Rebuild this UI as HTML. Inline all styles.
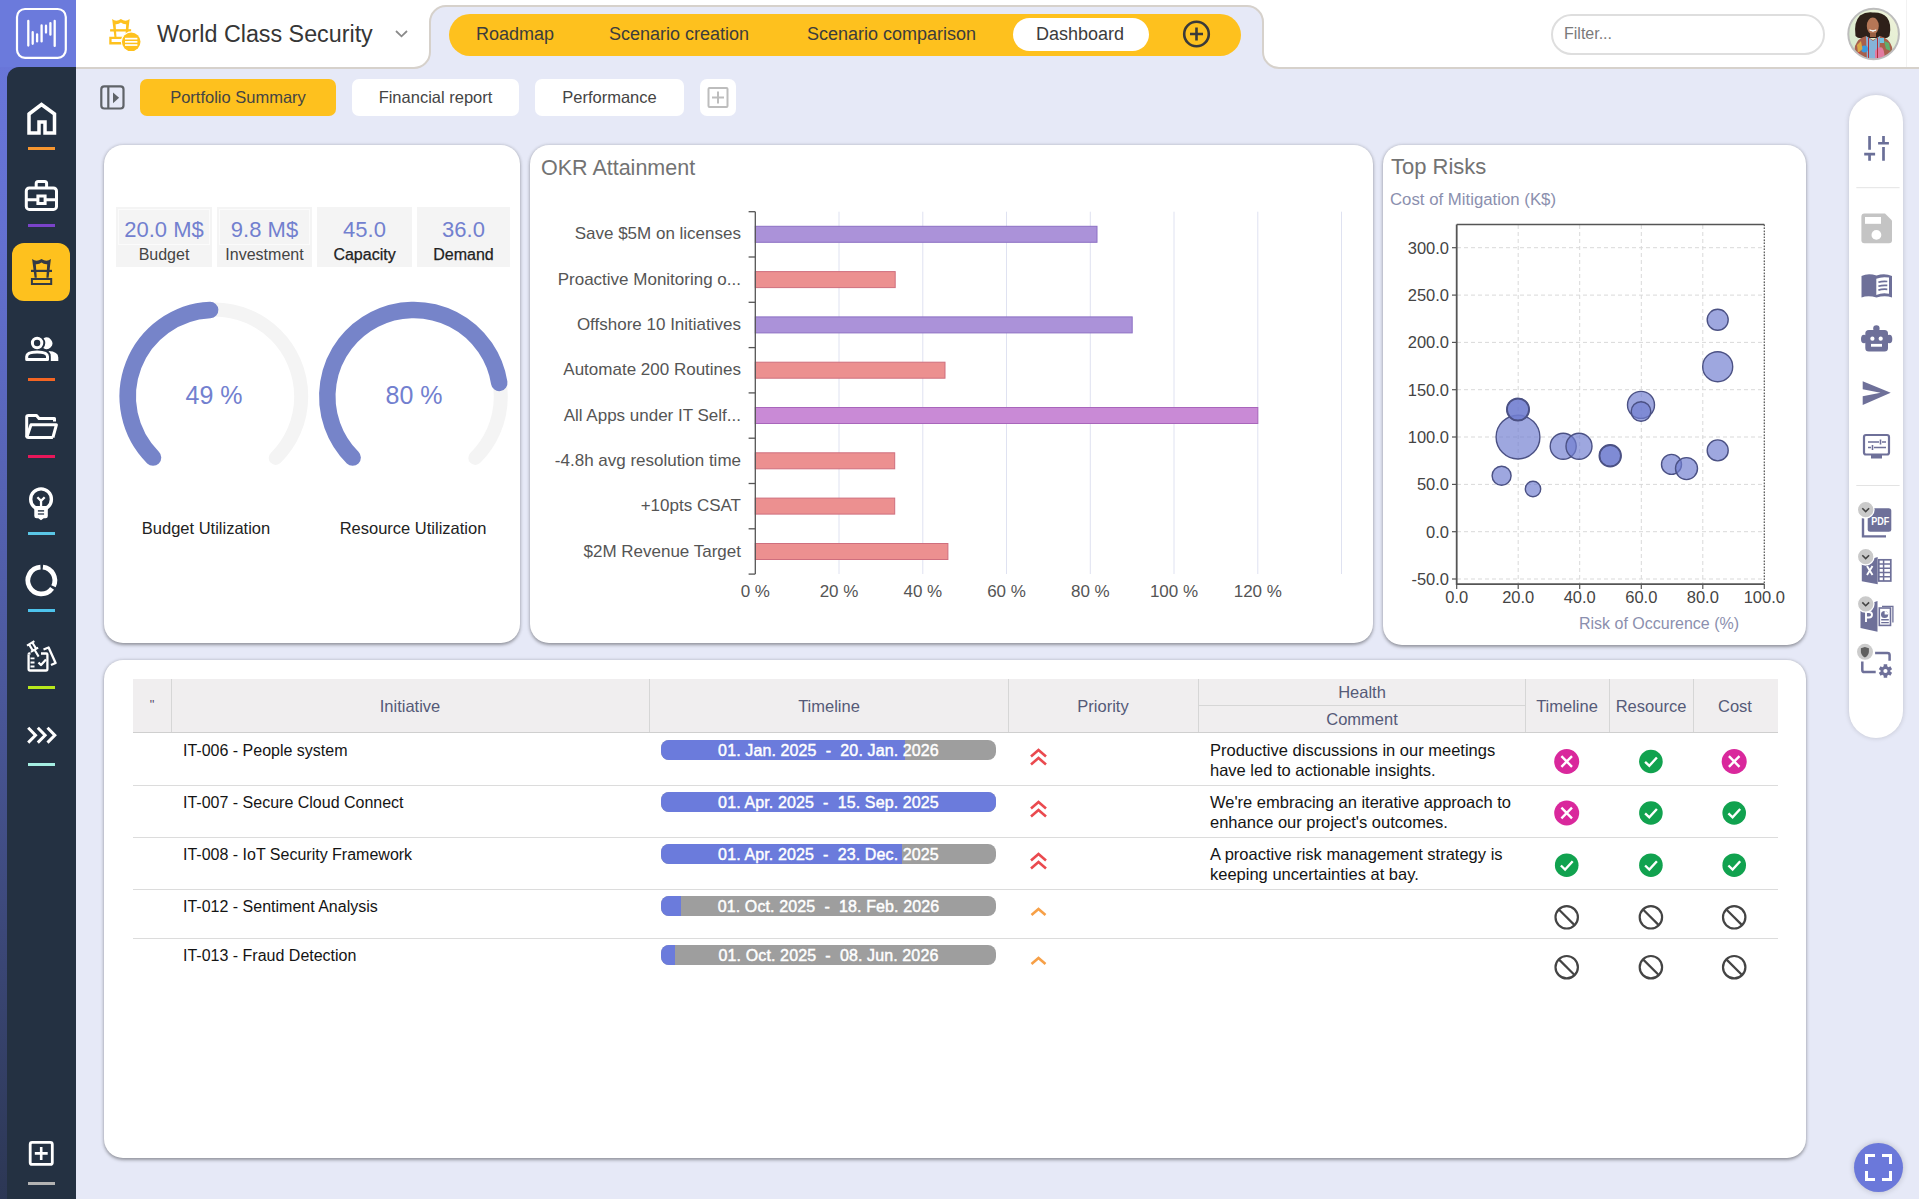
<!DOCTYPE html>
<html><head><meta charset="utf-8">
<style>
*{box-sizing:border-box;margin:0;padding:0}
html,body{width:1919px;height:1199px;overflow:hidden;background:#e6e9f7;font-family:"Liberation Sans",sans-serif;color:#333}
.abs{position:absolute}
svg{position:absolute;overflow:visible}
#sb{position:absolute;left:0;top:0;width:76px;height:1199px;background:linear-gradient(#6b78dc 0,#6370d0 250px,#4a5799 700px,#2c3754 1199px)}
#sbtop{position:absolute;left:0;top:0;width:76px;height:67px;background:#6b7adc}
#sbpanel{position:absolute;left:7px;top:67px;width:69px;height:1132px;background:#243142;border-top-left-radius:12px}
#hdr{position:absolute;left:76px;top:0;width:1843px;height:69px;background:#fff;border-bottom:2px solid #d6d1cb}
.card{position:absolute;background:#fff;border-radius:19px;box-shadow:0 1.5px 3.5px rgba(0,0,0,.34),0 0 4px rgba(0,0,0,.08)}
.btn{position:absolute;top:79px;height:37px;border-radius:7px;background:#fff;font-size:16.5px;color:#444;text-align:center;line-height:37px}
.nav{position:absolute;top:22px;font-size:18px;line-height:24px;color:#3c3c3c;white-space:nowrap}
.ul{position:absolute;left:28px;width:27px;height:3px}
.t{position:absolute;white-space:nowrap}
</style></head><body>
<div id="sb"></div><div id="sbtop"></div><div id="sbpanel"></div>
<div id="hdr"></div>
<!-- header tab shape -->
<svg style="left:0;top:0" width="1919" height="75">
 <path d="M414 68 A16 16 0 0 0 430 52 L430 22 A16 16 0 0 1 446 6 L1247 6 A16 16 0 0 1 1263 22 L1263 52 A16 16 0 0 0 1279 68 L1279 72 L414 72 Z" fill="#e6e9f7"/>
 <path d="M398 68 L414 68 A16 16 0 0 0 430 52 L430 22 A16 16 0 0 1 446 6 L1247 6 A16 16 0 0 1 1263 22 L1263 52 A16 16 0 0 0 1279 68 L1290 68" fill="none" stroke="#d6d1cb" stroke-width="2"/>
 <rect x="449" y="14" width="792" height="42" rx="21" fill="#fec11e"/>
 <rect x="1013" y="18" width="136" height="33" rx="16.5" fill="#fff"/>
 <circle cx="1196.5" cy="34" r="12.3" fill="none" stroke="#3a3a3a" stroke-width="2.6"/>
 <path d="M1196.5 27.5 V40.5 M1190 34 H1203" stroke="#3a3a3a" stroke-width="2.6"/>
 <!-- title icon -->
 <g transform="translate(110.1,19) scale(0.93,0.97)" fill="#fec11e">
  <path d="M2.2 0 Q6.5 3.6 11.6 0 Q16.7 3.6 21 0 L18.7 18.8 L16.5 18.8 L17.3 5.3 Q14 5.6 11.6 3.6 Q9.2 5.6 5.9 5.3 L6.9 18.8 L4.7 18.8 Z"/>
  <rect x="0" y="10.5" width="22.6" height="2.4"/>
  <path d="M-0.9 18.2 H22.3 V26.2 H-0.9 Z M1.6 20.6 V23.8 H20.3 V20.6 Z" fill-rule="evenodd"/>
 </g>
 <circle cx="131.2" cy="41.8" r="10.4" fill="#fff"/>
 <circle cx="131.2" cy="41.8" r="9.3" fill="#fec11e"/>
 <rect x="125" y="37.8" width="12.4" height="1.7" fill="#fff"/>
 <rect x="125" y="41" width="12.4" height="1.7" fill="#fff"/>
 <rect x="125" y="44.2" width="12.4" height="1.7" fill="#fff"/>
 <path d="M396 31 L401.5 36.3 L407 31" fill="none" stroke="#8a8a8a" stroke-width="1.8"/>
</svg>
<div class="t" style="left:157px;top:19.5px;font-size:23.3px;line-height:28px;color:#363636">World Class Security</div>
<div class="nav" style="left:476px">Roadmap</div>
<div class="nav" style="left:609px">Scenario creation</div>
<div class="nav" style="left:807px">Scenario comparison</div>
<div class="nav" style="left:1036px">Dashboard</div>
<!-- filter + avatar -->
<div class="abs" style="left:1551px;top:14px;width:274px;height:41px;border:2px solid #dedede;border-radius:21px"></div>
<div class="t" style="left:1564px;top:24px;font-size:16px;line-height:20px;color:#7a7a7a">Filter...</div>
<div class="abs" style="left:1906px;top:0;width:1px;height:67px;background:#f2f2f2"></div>
<svg style="left:0;top:0" width="1919" height="70">
 <defs><clipPath id="avc"><circle cx="1873.6" cy="34" r="25.3"/></clipPath>
 <linearGradient id="avbg" x1="0" y1="1" x2="1" y2="0"><stop offset="0" stop-color="#cfe8c9"/><stop offset="1" stop-color="#f5f4dc"/></linearGradient></defs>
 <g clip-path="url(#avc)">
  <rect x="1845" y="5" width="60" height="60" fill="url(#avbg)"/>
  <path d="M1855.5 36 Q1853.5 22 1860 15.5 Q1866 11.5 1873 12.5 Q1882 12 1887 17.5 Q1892 24 1889.5 36 Q1887 39 1882 38 L1864 38 Q1858 39 1855.5 36 Z" fill="#2e2019"/>
  <ellipse cx="1872.8" cy="26" rx="6" ry="8.4" fill="#b57656"/>
  <path d="M1869.6 30 Q1873 32.5 1876.2 30 Q1873 31.4 1869.6 30 Z" fill="#fff" stroke="#f2f2f2" stroke-width="1"/>
  <rect x="1870" y="33" width="6" height="4" fill="#9a6044"/>
  <path d="M1853 62 L1855 46 Q1858 38 1866 36 L1873 40 L1880 36 Q1889 38 1892 47 L1894 62 Z" fill="#a8604c"/>
  <path d="M1866 36 L1873 41 L1880 36 L1879 62 L1867 62 Z" fill="#86b3d8"/>
  <circle cx="1864.5" cy="49" r="3.4" fill="#3a9be0"/>
  <path d="M1875 62 V51 Q1877.5 46 1882 47.5 Q1885 50 1884.5 62 Z" fill="#e27aa0"/>
  <path d="M1857 45 L1861 41 L1862.5 49 L1858 53 Z" fill="#d9a846"/>
  <path d="M1884 41 L1889 43 L1890.5 51 L1886 49 Z" fill="#5fae6c"/>
  <path d="M1855.5 52 L1860 52 L1860 58 L1856 58 Z" fill="#c8483e"/>
  <path d="M1880 38 L1884 38 L1884 43 L1880 43 Z" fill="#74c1e0"/>
  <path d="M1868.5 38 V62 M1877.5 38 V62" stroke="#b0303a" stroke-width="1"/>
 </g>
 <circle cx="1873.6" cy="34" r="25.3" fill="none" stroke="#bdbdbd" stroke-width="2"/>
</svg>
<!-- sidebar icons -->
<svg style="left:0;top:0" width="76" height="1199">
 <rect x="17" y="9" width="48.8" height="48.8" rx="8" fill="none" stroke="#fff" stroke-width="2.2"/>
 <g stroke="#fff" stroke-width="2.3" stroke-linecap="round">
  <path d="M28.3 21 V45.6 M32.7 32.2 V43.8 M37.1 34.3 V41.4 M41.6 25.5 V41.4 M46 25.7 V32.6 M50.4 23.1 V34.7 M54.7 21 V45.9"/>
 </g>
 <g fill="none" stroke="#fff" stroke-width="3.5">
  <path d="M29 114 L41.5 104.5 L54.5 114 V133 H45 V122 H39 V133 H29 Z"/>
 </g>
 <g fill="none" stroke="#fff" stroke-width="3">
  <rect x="26.3" y="187.9" width="30.2" height="21.5" rx="3"/>
  <path d="M36.2 187.9 V183.5 Q36.2 181.5 38.2 181.5 H44.6 Q46.6 181.5 46.6 183.5 V187.9"/>
  <path d="M26.3 199.8 H37.9 M45.1 199.8 H56.5"/>
  <rect x="37.9" y="196" width="7.2" height="7.5"/>
 </g>
 <rect x="12" y="243" width="58" height="58" rx="12" fill="#fec11e"/>
 <g transform="translate(29.9,259)" fill="#333a45">
  <path d="M2.2 0 Q6.5 3.6 11.6 0 Q16.7 3.6 21 0 L18.7 18.8 L16.5 18.8 L17.3 5.3 Q14 5.6 11.6 3.6 Q9.2 5.6 5.9 5.3 L6.9 18.8 L4.7 18.8 Z"/>
  <rect x="1.1" y="10.8" width="21" height="2.2"/>
  <path d="M1 19 H22.3 V26 H1 Z M3 21 V24 H20.3 V21 Z" fill-rule="evenodd"/>
 </g>
 <g fill="none" stroke="#fff" stroke-width="3">
  <circle cx="37.1" cy="343" r="4.7"/>
  <path d="M26.7 359.5 V356.5 Q26.7 352 37.1 352 Q47.5 352 47.5 356.5 V359.5 Z" stroke-linejoin="round"/>
 </g>
 <path d="M43.57 338.3 A5.8 5.8 0 1 1 43.26 348.1 A8 8 0 0 0 43.57 338.3 Z" fill="#fff"/>
 <path d="M48.5 351 Q58.3 351.5 58.3 357.5 V361 H50.8 V357 Q50.8 353 48.5 351 Z" fill="#fff"/>
 <g fill="none" stroke="#fff" stroke-width="3" stroke-linejoin="round">
  <path d="M52.9 437.5 H28.5 Q26.7 437.5 26.7 435.5 V417 Q26.7 415.5 28.5 415.5 H36.5 L39 418.4 H54.5 V421.5"/>
  <path d="M26.7 437.5 L31 424.8 H56.4 L52.9 437.5"/>
 </g>
 <circle cx="41.05" cy="499.2" r="10.35" fill="none" stroke="#fff" stroke-width="3.4"/>
 <path d="M34.3 506 V516 Q34.3 518.3 36.6 518.3 H38.3 L41 520.3 L43.7 518.3 H45.5 Q47.8 518.3 47.8 516 V506 Z" fill="#fff"/>
 <rect x="37.9" y="510.2" width="6.2" height="1.4" fill="#243142"/>
 <rect x="37.9" y="513.3" width="6.2" height="1.4" fill="#3a4658"/>
 <path d="M37.4 497.3 L41.05 500.9 L44.7 497.3 M41.05 500.9 V507" fill="none" stroke="#fff" stroke-width="2.3"/>
 <g fill="none" stroke="#fff" stroke-width="4.8">
  <path d="M42.9 567.1 A13.4 13.4 0 0 1 53.5 586.2"/>
  <path d="M52.1 588.4 A13.4 13.4 0 1 1 40.5 567.1"/>
 </g>
 <g fill="none" stroke="#fff" stroke-width="2.3" stroke-linejoin="round">
  <path d="M28.6 654.5 V669 Q28.6 670.5 30 670.5 H46 Q47.4 670.5 47.4 669 V654.5 Q47.4 653.5 46.5 653.5 H41"/>
  <path d="M28.6 654.5 Q28.6 653.5 29.5 653.5 H30.5"/>
  <path d="M43.5 649.5 L48.6 647.5 L55.6 663 L51 665"/>
  <path d="M38.5 662.5 L41 665 L46 659.5"/>
  <path d="M30.5 658.3 H34.5 M30.5 662.5 H34.5 M30.5 666.5 H34.5" stroke-width="1.8"/>
  <g transform="translate(30.7,643.4) rotate(-31.1)" stroke-width="2.1" stroke-linejoin="miter"><path d="M-4.3 0 H4.3 M-1.9 0 V7 M1.9 0 V7 M-4.2 7.4 H4.2 M0 7.4 V15.4" stroke-linecap="butt"/></g>
 </g>
 <g fill="none" stroke="#fff" stroke-width="3">
  <path d="M28.2 727.8 L35.5 735.3 L28.2 742.6 M37.8 727.8 L45.1 735.3 L37.8 742.6 M47.5 727.8 L54.8 735.3 L47.5 742.6"/>
 </g>
 <g fill="none" stroke="#fff" stroke-width="2.8">
  <rect x="30.2" y="1142.4" width="22.1" height="22" rx="2"/>
  <path d="M41.2 1147 V1160 M34.8 1153.4 H47.7" stroke-width="2.6"/>
 </g>
</svg>
<div class="ul" style="top:147px;background:#f7962f"></div>
<div class="ul" style="top:224px;background:#7a43c9"></div>
<div class="ul" style="top:378px;background:#f46523"></div>
<div class="ul" style="top:455px;background:#e8175a"></div>
<div class="ul" style="top:532px;background:#5ac6e6"></div>
<div class="ul" style="top:609px;background:#4dc3ec"></div>
<div class="ul" style="top:686px;background:#b8e81c"></div>
<div class="ul" style="top:763px;background:#a5eee2"></div>
<div class="ul" style="top:1182px;background:#b3b3b3"></div>

<!-- sub tabs -->
<svg style="left:0;top:0" width="200" height="130">
 <rect x="101.3" y="86.3" width="22.2" height="22.2" rx="3" fill="none" stroke="#5f6368" stroke-width="2.2"/>
 <path d="M108.3 86.3 V108.5" stroke="#5f6368" stroke-width="2.2"/>
 <path d="M113 92.4 L119.1 97.8 L113 103.2 Z" fill="#5f6368"/>
</svg>
<div class="btn" style="left:140px;width:196px;background:#fec11e">Portfolio Summary</div>
<div class="btn" style="left:352px;width:167px">Financial report</div>
<div class="btn" style="left:535px;width:149px">Performance</div>
<div class="btn" style="left:700px;width:36px"></div>
<svg style="left:0;top:0" width="760" height="130">
 <rect x="708.5" y="88" width="19" height="19" rx="1" fill="none" stroke="#bdbdbd" stroke-width="2"/>
 <path d="M718 91.5 V103.5 M712 97.5 H724" stroke="#bdbdbd" stroke-width="2"/>
</svg>

<!-- cards -->
<div class="card" style="left:104px;top:145px;width:416px;height:498px"></div>
<div class="card" style="left:530px;top:145px;width:843px;height:498px"></div>
<div class="card" style="left:1383px;top:145px;width:423px;height:500px"></div>
<div class="card" style="left:104px;top:660px;width:1702px;height:498px"></div>
<div class="abs" style="left:116px;top:207px;width:96px;height:60px;background:#f4f4f4"></div>
<div class="abs" style="left:118px;top:209px;width:92px;height:36px;border:1px solid #fbfbfb"></div>
<div class="t" style="left:116px;top:217px;width:96px;text-align:center;font-size:22px;line-height:26px;color:#7280cf">20.0 M$</div>
<div class="t" style="left:116px;top:245px;width:96px;text-align:center;font-size:16px;line-height:20px;color:#444">Budget</div>
<div class="abs" style="left:217px;top:207px;width:95px;height:60px;background:#f4f4f4"></div>
<div class="abs" style="left:219px;top:209px;width:91px;height:36px;border:1px solid #fbfbfb"></div>
<div class="t" style="left:217px;top:217px;width:95px;text-align:center;font-size:22px;line-height:26px;color:#7280cf">9.8 M$</div>
<div class="t" style="left:217px;top:245px;width:95px;text-align:center;font-size:16px;line-height:20px;color:#444">Investment</div>
<div class="abs" style="left:317px;top:207px;width:95px;height:60px;background:#f4f4f4"></div>
<div class="t" style="left:317px;top:217px;width:95px;text-align:center;font-size:22px;line-height:26px;color:#7280cf">45.0</div>
<div class="t" style="left:317px;top:245px;width:95px;text-align:center;font-size:16px;line-height:20px;color:#222;-webkit-text-stroke:0.25px #222">Capacity</div>
<div class="abs" style="left:417px;top:207px;width:93px;height:60px;background:#f4f4f4"></div>
<div class="t" style="left:417px;top:217px;width:93px;text-align:center;font-size:22px;line-height:26px;color:#7280cf">36.0</div>
<div class="t" style="left:417px;top:245px;width:93px;text-align:center;font-size:16px;line-height:20px;color:#222;-webkit-text-stroke:0.25px #222">Demand</div>
<svg style="left:0;top:0" width="1919" height="700">
<path d="M152.68 457.92 A87 87 0 1 1 275.72 457.92" fill="none" stroke="#f4f4f4" stroke-width="14" stroke-linecap="round"/>
<path d="M153.04 457.56 A86.5 86.5 0 0 1 210.13 310.00" fill="none" stroke="#7684c9" stroke-width="16.5" stroke-linecap="round"/>
<path d="M352.28 457.92 A87 87 0 1 1 475.32 457.92" fill="none" stroke="#f4f4f4" stroke-width="14" stroke-linecap="round"/>
<path d="M352.64 457.56 A86.5 86.5 0 1 1 499.24 382.87" fill="none" stroke="#7684c9" stroke-width="16.5" stroke-linecap="round"/>
</svg>
<div class="t" style="left:114px;top:380px;width:200px;text-align:center;font-size:25px;line-height:30px;color:#7280cf">49 %</div>
<div class="t" style="left:314px;top:380px;width:200px;text-align:center;font-size:25px;line-height:30px;color:#7280cf">80 %</div>
<div class="t" style="left:106px;top:518px;width:200px;text-align:center;font-size:16.5px;line-height:20px;color:#222">Budget Utilization</div>
<div class="t" style="left:313px;top:518px;width:200px;text-align:center;font-size:16.5px;line-height:20px;color:#222">Resource Utilization</div>
<div class="t" style="left:541px;top:155px;font-size:21.5px;line-height:26px;color:#737373">OKR Attainment</div>
<svg style="left:0;top:0" width="1919" height="700">
<path d="M839.0 211.7 V574" stroke="#dfe2f1" stroke-width="1"/>
<path d="M922.8 211.7 V574" stroke="#dfe2f1" stroke-width="1"/>
<path d="M1006.5 211.7 V574" stroke="#dfe2f1" stroke-width="1"/>
<path d="M1090.3 211.7 V574" stroke="#dfe2f1" stroke-width="1"/>
<path d="M1174.0 211.7 V574" stroke="#dfe2f1" stroke-width="1"/>
<path d="M1257.8 211.7 V574" stroke="#dfe2f1" stroke-width="1"/>
<path d="M1341.5 211.7 V574" stroke="#dfe2f1" stroke-width="1"/>
<rect x="755.3" y="226.3" width="341.7" height="16" fill="#ab92d9" stroke="#8c70c4" stroke-width="1"/>
<rect x="755.3" y="271.6" width="139.9" height="16" fill="#ec9090" stroke="#cf6f7e" stroke-width="1"/>
<rect x="755.3" y="316.9" width="376.9" height="16" fill="#ab92d9" stroke="#8c70c4" stroke-width="1"/>
<rect x="755.3" y="362.2" width="189.7" height="16" fill="#ec9090" stroke="#cf6f7e" stroke-width="1"/>
<rect x="755.3" y="407.5" width="502.5" height="16" fill="#c98ad6" stroke="#a866bb" stroke-width="1"/>
<rect x="755.3" y="452.8" width="139.4" height="16" fill="#ec9090" stroke="#cf6f7e" stroke-width="1"/>
<rect x="755.3" y="498.1" width="139.4" height="16" fill="#ec9090" stroke="#cf6f7e" stroke-width="1"/>
<rect x="755.3" y="543.5" width="192.6" height="16" fill="#ec9090" stroke="#cf6f7e" stroke-width="1"/>
<path d="M748.6 211.7 H755.3" stroke="#555" stroke-width="1.3"/>
<path d="M748.6 257.0 H755.3" stroke="#555" stroke-width="1.3"/>
<path d="M748.6 302.3 H755.3" stroke="#555" stroke-width="1.3"/>
<path d="M748.6 347.6 H755.3" stroke="#555" stroke-width="1.3"/>
<path d="M748.6 392.9 H755.3" stroke="#555" stroke-width="1.3"/>
<path d="M748.6 438.2 H755.3" stroke="#555" stroke-width="1.3"/>
<path d="M748.6 483.5 H755.3" stroke="#555" stroke-width="1.3"/>
<path d="M748.6 528.8 H755.3" stroke="#555" stroke-width="1.3"/>
<path d="M748.6 574.1 H755.3" stroke="#555" stroke-width="1.3"/>
<path d="M755.3 211.7 V574.1" stroke="#555" stroke-width="1.3"/>
</svg>
<div class="t" style="left:541px;top:223.3px;width:200px;text-align:right;font-size:17px;line-height:22px;color:#555">Save $5M on licenses</div>
<div class="t" style="left:541px;top:268.6px;width:200px;text-align:right;font-size:17px;line-height:22px;color:#555">Proactive Monitoring o...</div>
<div class="t" style="left:541px;top:313.9px;width:200px;text-align:right;font-size:17px;line-height:22px;color:#555">Offshore 10 Initiatives</div>
<div class="t" style="left:541px;top:359.2px;width:200px;text-align:right;font-size:17px;line-height:22px;color:#555">Automate 200 Routines</div>
<div class="t" style="left:541px;top:404.5px;width:200px;text-align:right;font-size:17px;line-height:22px;color:#555">All Apps under IT Self...</div>
<div class="t" style="left:541px;top:449.8px;width:200px;text-align:right;font-size:17px;line-height:22px;color:#555">-4.8h avg resolution time</div>
<div class="t" style="left:541px;top:495.1px;width:200px;text-align:right;font-size:17px;line-height:22px;color:#555">+10pts CSAT</div>
<div class="t" style="left:541px;top:540.5px;width:200px;text-align:right;font-size:17px;line-height:22px;color:#555">$2M Revenue Target</div>
<div class="t" style="left:715.3px;top:581px;width:80px;text-align:center;font-size:17px;line-height:22px;color:#555">0 %</div>
<div class="t" style="left:799.0px;top:581px;width:80px;text-align:center;font-size:17px;line-height:22px;color:#555">20 %</div>
<div class="t" style="left:882.8px;top:581px;width:80px;text-align:center;font-size:17px;line-height:22px;color:#555">40 %</div>
<div class="t" style="left:966.5px;top:581px;width:80px;text-align:center;font-size:17px;line-height:22px;color:#555">60 %</div>
<div class="t" style="left:1050.3px;top:581px;width:80px;text-align:center;font-size:17px;line-height:22px;color:#555">80 %</div>
<div class="t" style="left:1134.0px;top:581px;width:80px;text-align:center;font-size:17px;line-height:22px;color:#555">100 %</div>
<div class="t" style="left:1217.8px;top:581px;width:80px;text-align:center;font-size:17px;line-height:22px;color:#555">120 %</div>
<div class="t" style="left:1391px;top:154px;font-size:22px;line-height:26px;color:#737373">Top Risks</div>
<div class="t" style="left:1390px;top:190px;font-size:16.8px;line-height:20px;color:#8b8fae">Cost of Mitigation (K$)</div>
<div class="t" style="left:1579px;top:614px;font-size:16px;line-height:20px;color:#8b8fae">Risk of Occurence (%)</div>
<svg style="left:0;top:0" width="1919" height="700">
<path d="M1457 247.7 H1764" stroke="#d9d9d9" stroke-width="1" stroke-dasharray="4 3"/>
<path d="M1452 247.7 H1457" stroke="#555" stroke-width="1.2"/>
<path d="M1457 295.1 H1764" stroke="#d9d9d9" stroke-width="1" stroke-dasharray="4 3"/>
<path d="M1452 295.1 H1457" stroke="#555" stroke-width="1.2"/>
<path d="M1457 342.4 H1764" stroke="#d9d9d9" stroke-width="1" stroke-dasharray="4 3"/>
<path d="M1452 342.4 H1457" stroke="#555" stroke-width="1.2"/>
<path d="M1457 389.7 H1764" stroke="#d9d9d9" stroke-width="1" stroke-dasharray="4 3"/>
<path d="M1452 389.7 H1457" stroke="#555" stroke-width="1.2"/>
<path d="M1457 437.0 H1764" stroke="#d9d9d9" stroke-width="1" stroke-dasharray="4 3"/>
<path d="M1452 437.0 H1457" stroke="#555" stroke-width="1.2"/>
<path d="M1457 484.4 H1764" stroke="#d9d9d9" stroke-width="1" stroke-dasharray="4 3"/>
<path d="M1452 484.4 H1457" stroke="#555" stroke-width="1.2"/>
<path d="M1457 531.7 H1764" stroke="#d9d9d9" stroke-width="1" stroke-dasharray="4 3"/>
<path d="M1452 531.7 H1457" stroke="#555" stroke-width="1.2"/>
<path d="M1457 579.0 H1764" stroke="#d9d9d9" stroke-width="1" stroke-dasharray="4 3"/>
<path d="M1452 579.0 H1457" stroke="#555" stroke-width="1.2"/>
<path d="M1518.2 225 V584" stroke="#d9d9d9" stroke-width="1" stroke-dasharray="4 3"/>
<path d="M1579.7 225 V584" stroke="#d9d9d9" stroke-width="1" stroke-dasharray="4 3"/>
<path d="M1641.3 225 V584" stroke="#d9d9d9" stroke-width="1" stroke-dasharray="4 3"/>
<path d="M1702.8 225 V584" stroke="#d9d9d9" stroke-width="1" stroke-dasharray="4 3"/>
<path d="M1764.3 225 V584" stroke="#d9d9d9" stroke-width="1" stroke-dasharray="4 3"/>
<path d="M1456.7 584 V589" stroke="#555" stroke-width="1.2"/>
<path d="M1518.2 584 V589" stroke="#555" stroke-width="1.2"/>
<path d="M1579.7 584 V589" stroke="#555" stroke-width="1.2"/>
<path d="M1641.3 584 V589" stroke="#555" stroke-width="1.2"/>
<path d="M1702.8 584 V589" stroke="#555" stroke-width="1.2"/>
<path d="M1764.3 584 V589" stroke="#555" stroke-width="1.2"/>
<path d="M1456.7 224.5 H1764.3" fill="none" stroke="#555" stroke-width="1.3"/><path d="M1764.3 224.5 V584.2" fill="none" stroke="#555" stroke-width="1.2" stroke-dasharray="1.5 1.5"/>
<path d="M1456.7 224.5 V584.2 H1764.3" fill="none" stroke="#555" stroke-width="1.8"/>
<circle cx="1518" cy="437.1" r="21.9" fill="rgba(112,126,208,0.68)" stroke="#4b5184" stroke-width="1.4"/>
<circle cx="1518" cy="409.5" r="11.3" fill="rgba(112,126,208,0.68)" stroke="#4b5184" stroke-width="1.4"/>
<circle cx="1518" cy="409.5" r="10.8" fill="rgba(112,126,208,0.68)" stroke="#4b5184" stroke-width="1.4"/>
<circle cx="1501.6" cy="475.7" r="9.5" fill="rgba(112,126,208,0.68)" stroke="#4b5184" stroke-width="1.4"/>
<circle cx="1533" cy="489" r="7.7" fill="rgba(112,126,208,0.68)" stroke="#4b5184" stroke-width="1.4"/>
<circle cx="1563.2" cy="446.2" r="13" fill="rgba(112,126,208,0.68)" stroke="#4b5184" stroke-width="1.4"/>
<circle cx="1579" cy="446.2" r="13" fill="rgba(112,126,208,0.68)" stroke="#4b5184" stroke-width="1.4"/>
<circle cx="1610.2" cy="455.7" r="11" fill="rgba(112,126,208,0.68)" stroke="#4b5184" stroke-width="1.4"/>
<circle cx="1610.2" cy="455.7" r="10.5" fill="rgba(112,126,208,0.68)" stroke="#4b5184" stroke-width="1.4"/>
<circle cx="1641" cy="404.9" r="13.5" fill="rgba(112,126,208,0.68)" stroke="#4b5184" stroke-width="1.4"/>
<circle cx="1641" cy="411.5" r="9.8" fill="rgba(112,126,208,0.68)" stroke="#4b5184" stroke-width="1.4"/>
<circle cx="1671.5" cy="464.4" r="10" fill="rgba(112,126,208,0.68)" stroke="#4b5184" stroke-width="1.4"/>
<circle cx="1686.5" cy="468.6" r="11" fill="rgba(112,126,208,0.68)" stroke="#4b5184" stroke-width="1.4"/>
<circle cx="1717.7" cy="319.8" r="10.5" fill="rgba(112,126,208,0.68)" stroke="#4b5184" stroke-width="1.4"/>
<circle cx="1717.7" cy="366.7" r="15" fill="rgba(112,126,208,0.68)" stroke="#4b5184" stroke-width="1.4"/>
<circle cx="1717.7" cy="450.4" r="10.5" fill="rgba(112,126,208,0.68)" stroke="#4b5184" stroke-width="1.4"/>
</svg>
<div class="t" style="left:1389px;top:237.7px;width:60px;text-align:right;font-size:16.5px;line-height:20px;color:#444">300.0</div>
<div class="t" style="left:1389px;top:285.1px;width:60px;text-align:right;font-size:16.5px;line-height:20px;color:#444">250.0</div>
<div class="t" style="left:1389px;top:332.4px;width:60px;text-align:right;font-size:16.5px;line-height:20px;color:#444">200.0</div>
<div class="t" style="left:1389px;top:379.7px;width:60px;text-align:right;font-size:16.5px;line-height:20px;color:#444">150.0</div>
<div class="t" style="left:1389px;top:427.0px;width:60px;text-align:right;font-size:16.5px;line-height:20px;color:#444">100.0</div>
<div class="t" style="left:1389px;top:474.4px;width:60px;text-align:right;font-size:16.5px;line-height:20px;color:#444">50.0</div>
<div class="t" style="left:1389px;top:521.7px;width:60px;text-align:right;font-size:16.5px;line-height:20px;color:#444">0.0</div>
<div class="t" style="left:1389px;top:569.0px;width:60px;text-align:right;font-size:16.5px;line-height:20px;color:#444">-50.0</div>
<div class="t" style="left:1421.7px;top:587px;width:70px;text-align:center;font-size:16.5px;line-height:20px;color:#444">0.0</div>
<div class="t" style="left:1483.2px;top:587px;width:70px;text-align:center;font-size:16.5px;line-height:20px;color:#444">20.0</div>
<div class="t" style="left:1544.7px;top:587px;width:70px;text-align:center;font-size:16.5px;line-height:20px;color:#444">40.0</div>
<div class="t" style="left:1606.3px;top:587px;width:70px;text-align:center;font-size:16.5px;line-height:20px;color:#444">60.0</div>
<div class="t" style="left:1667.8px;top:587px;width:70px;text-align:center;font-size:16.5px;line-height:20px;color:#444">80.0</div>
<div class="t" style="left:1729.3px;top:587px;width:70px;text-align:center;font-size:16.5px;line-height:20px;color:#444">100.0</div>
<div class="abs" style="left:133px;top:679px;width:1645px;height:54px;background:#f0eeef;border-bottom:1.5px solid #cfcfcf"></div>
<div class="abs" style="left:171px;top:679px;width:1px;height:53px;background:#d6d6d6"></div>
<div class="abs" style="left:649px;top:679px;width:1px;height:53px;background:#d6d6d6"></div>
<div class="abs" style="left:1008px;top:679px;width:1px;height:53px;background:#d6d6d6"></div>
<div class="abs" style="left:1198px;top:679px;width:1px;height:53px;background:#d6d6d6"></div>
<div class="abs" style="left:1525px;top:679px;width:1px;height:53px;background:#d6d6d6"></div>
<div class="abs" style="left:1609px;top:679px;width:1px;height:53px;background:#d6d6d6"></div>
<div class="abs" style="left:1693px;top:679px;width:1px;height:53px;background:#d6d6d6"></div>
<div class="abs" style="left:1198px;top:705px;width:327px;height:1px;background:#d6d6d6"></div>
<div class="t" style="left:142px;top:694.5px;width:20px;text-align:center;font-size:13px;line-height:20px;color:#5a4d6e">"</div>
<div class="t" style="left:310px;top:696px;width:200px;text-align:center;font-size:16.5px;line-height:20px;color:#555a78">Initiative</div>
<div class="t" style="left:729px;top:696px;width:200px;text-align:center;font-size:16.5px;line-height:20px;color:#555a78">Timeline</div>
<div class="t" style="left:1003px;top:696px;width:200px;text-align:center;font-size:16.5px;line-height:20px;color:#555a78">Priority</div>
<div class="t" style="left:1262px;top:682px;width:200px;text-align:center;font-size:16.5px;line-height:20px;color:#555a78">Health</div>
<div class="t" style="left:1262px;top:709px;width:200px;text-align:center;font-size:16.5px;line-height:20px;color:#555a78">Comment</div>
<div class="t" style="left:1467px;top:696px;width:200px;text-align:center;font-size:16.5px;line-height:20px;color:#555a78">Timeline</div>
<div class="t" style="left:1551px;top:696px;width:200px;text-align:center;font-size:16.5px;line-height:20px;color:#555a78">Resource</div>
<div class="t" style="left:1635px;top:696px;width:200px;text-align:center;font-size:16.5px;line-height:20px;color:#555a78">Cost</div>
<div class="abs" style="left:133px;top:785px;width:1645px;height:1px;background:#dcdcdc"></div>
<div class="abs" style="left:133px;top:837px;width:1645px;height:1px;background:#dcdcdc"></div>
<div class="abs" style="left:133px;top:889px;width:1645px;height:1px;background:#dcdcdc"></div>
<div class="abs" style="left:133px;top:938px;width:1645px;height:1px;background:#dcdcdc"></div>
<div class="t" style="left:183px;top:741px;font-size:16px;line-height:20px;color:#141414">IT-006 - People system</div>
<div class="abs" style="left:661px;top:740px;width:335px;height:19.6px;border-radius:8px;background:#9e9e9e;overflow:hidden"><div class="abs" style="left:0;top:0;width:244.0px;height:20px;background:#6b7bdc"></div></div>
<div class="t" style="left:661px;top:741px;width:335px;text-align:center;font-size:16px;line-height:20px;color:#fff;-webkit-text-stroke:0.45px #fff;letter-spacing:0.12px;white-space:pre">01. Jan. 2025  -  20. Jan. 2026</div>
<div class="t" style="left:1210px;top:740px;font-size:16.5px;line-height:20px;color:#141414">Productive discussions in our meetings<br>have led to actionable insights.</div>
<div class="t" style="left:183px;top:793px;font-size:16px;line-height:20px;color:#141414">IT-007 - Secure Cloud Connect</div>
<div class="abs" style="left:661px;top:792px;width:335px;height:19.6px;border-radius:8px;background:#9e9e9e;overflow:hidden"><div class="abs" style="left:0;top:0;width:335.0px;height:20px;background:#6b7bdc"></div></div>
<div class="t" style="left:661px;top:793px;width:335px;text-align:center;font-size:16px;line-height:20px;color:#fff;-webkit-text-stroke:0.45px #fff;letter-spacing:0.12px;white-space:pre">01. Apr. 2025  -  15. Sep. 2025</div>
<div class="t" style="left:1210px;top:792px;font-size:16.5px;line-height:20px;color:#141414">We're embracing an iterative approach to<br>enhance our project's outcomes.</div>
<div class="t" style="left:183px;top:845px;font-size:16px;line-height:20px;color:#141414">IT-008 - IoT Security Framework</div>
<div class="abs" style="left:661px;top:844px;width:335px;height:19.6px;border-radius:8px;background:#9e9e9e;overflow:hidden"><div class="abs" style="left:0;top:0;width:240.6px;height:20px;background:#6b7bdc"></div></div>
<div class="t" style="left:661px;top:845px;width:335px;text-align:center;font-size:16px;line-height:20px;color:#fff;-webkit-text-stroke:0.45px #fff;letter-spacing:0.12px;white-space:pre">01. Apr. 2025  -  23. Dec. 2025</div>
<div class="t" style="left:1210px;top:844px;font-size:16.5px;line-height:20px;color:#141414">A proactive risk management strategy is<br>keeping uncertainties at bay.</div>
<div class="t" style="left:183px;top:897px;font-size:16px;line-height:20px;color:#141414">IT-012 - Sentiment Analysis</div>
<div class="abs" style="left:661px;top:896px;width:335px;height:19.6px;border-radius:8px;background:#9e9e9e;overflow:hidden"><div class="abs" style="left:0;top:0;width:19.8px;height:20px;background:#6b7bdc"></div></div>
<div class="t" style="left:661px;top:897px;width:335px;text-align:center;font-size:16px;line-height:20px;color:#fff;-webkit-text-stroke:0.45px #fff;letter-spacing:0.12px;white-space:pre">01. Oct. 2025  -  18. Feb. 2026</div>
<div class="t" style="left:183px;top:946px;font-size:16px;line-height:20px;color:#141414">IT-013 - Fraud Detection</div>
<div class="abs" style="left:661px;top:945px;width:335px;height:19.6px;border-radius:8px;background:#9e9e9e;overflow:hidden"><div class="abs" style="left:0;top:0;width:13.7px;height:20px;background:#6b7bdc"></div></div>
<div class="t" style="left:661px;top:946px;width:335px;text-align:center;font-size:16px;line-height:20px;color:#fff;-webkit-text-stroke:0.45px #fff;letter-spacing:0.12px;white-space:pre">01. Oct. 2025  -  08. Jun. 2026</div>
<svg style="left:0;top:0" width="1919" height="1199">
<path d="M1031 756.5 L1038.5 750.0 L1046 756.5 M1031 764.5 L1038.5 758.0 L1046 764.5" fill="none" stroke="#ea4a4f" stroke-width="2.6"/>
<circle cx="1566.7" cy="761.5" r="12.5" fill="#d9289c"/><path d="M1561.4 756.2 L1572.0 766.8 M1572.0 756.2 L1561.4 766.8" stroke="#fff" stroke-width="2.4"/>
<circle cx="1650.9" cy="761.5" r="11.8" fill="#11a24f"/><path d="M1645.1000000000001 761.8 L1649.3000000000002 765.8 L1656.9 757.5" fill="none" stroke="#fff" stroke-width="2.4"/>
<circle cx="1734.2" cy="761.5" r="12.5" fill="#d9289c"/><path d="M1728.9 756.2 L1739.5 766.8 M1739.5 756.2 L1728.9 766.8" stroke="#fff" stroke-width="2.4"/>
<path d="M1031 808.5 L1038.5 802.0 L1046 808.5 M1031 816.5 L1038.5 810.0 L1046 816.5" fill="none" stroke="#ea4a4f" stroke-width="2.6"/>
<circle cx="1566.7" cy="813" r="12.5" fill="#d9289c"/><path d="M1561.4 807.7 L1572.0 818.3 M1572.0 807.7 L1561.4 818.3" stroke="#fff" stroke-width="2.4"/>
<circle cx="1650.9" cy="813" r="11.8" fill="#11a24f"/><path d="M1645.1000000000001 813.3 L1649.3000000000002 817.3 L1656.9 809" fill="none" stroke="#fff" stroke-width="2.4"/>
<circle cx="1734.2" cy="813" r="11.8" fill="#11a24f"/><path d="M1728.4 813.3 L1732.6000000000001 817.3 L1740.2 809" fill="none" stroke="#fff" stroke-width="2.4"/>
<path d="M1031 860.5 L1038.5 854.0 L1046 860.5 M1031 868.5 L1038.5 862.0 L1046 868.5" fill="none" stroke="#ea4a4f" stroke-width="2.6"/>
<circle cx="1566.7" cy="865.2" r="11.8" fill="#11a24f"/><path d="M1560.9 865.5 L1565.1000000000001 869.5 L1572.7 861.2" fill="none" stroke="#fff" stroke-width="2.4"/>
<circle cx="1650.9" cy="865.2" r="11.8" fill="#11a24f"/><path d="M1645.1000000000001 865.5 L1649.3000000000002 869.5 L1656.9 861.2" fill="none" stroke="#fff" stroke-width="2.4"/>
<circle cx="1734.2" cy="865.2" r="11.8" fill="#11a24f"/><path d="M1728.4 865.5 L1732.6000000000001 869.5 L1740.2 861.2" fill="none" stroke="#fff" stroke-width="2.4"/>
<path d="M1031.5 915.0 L1038.5 909.0 L1045.5 915.0" fill="none" stroke="#f7a047" stroke-width="2.6"/>
<circle cx="1566.7" cy="917.3" r="11.2" fill="none" stroke="#444" stroke-width="2.2"/><path d="M1559.1000000000001 909.6999999999999 L1574.3 924.9" stroke="#444" stroke-width="2.2"/>
<circle cx="1650.9" cy="917.3" r="11.2" fill="none" stroke="#444" stroke-width="2.2"/><path d="M1643.3000000000002 909.6999999999999 L1658.5 924.9" stroke="#444" stroke-width="2.2"/>
<circle cx="1734.2" cy="917.3" r="11.2" fill="none" stroke="#444" stroke-width="2.2"/><path d="M1726.6000000000001 909.6999999999999 L1741.8 924.9" stroke="#444" stroke-width="2.2"/>
<path d="M1031.5 964.0 L1038.5 958.0 L1045.5 964.0" fill="none" stroke="#f7a047" stroke-width="2.6"/>
<circle cx="1566.7" cy="967.2" r="11.2" fill="none" stroke="#444" stroke-width="2.2"/><path d="M1559.1000000000001 959.6 L1574.3 974.8000000000001" stroke="#444" stroke-width="2.2"/>
<circle cx="1650.9" cy="967.2" r="11.2" fill="none" stroke="#444" stroke-width="2.2"/><path d="M1643.3000000000002 959.6 L1658.5 974.8000000000001" stroke="#444" stroke-width="2.2"/>
<circle cx="1734.2" cy="967.2" r="11.2" fill="none" stroke="#444" stroke-width="2.2"/><path d="M1726.6000000000001 959.6 L1741.8 974.8000000000001" stroke="#444" stroke-width="2.2"/>
</svg>

<!-- right sidebar -->
<div class="abs" style="left:1849px;top:94.5px;width:54px;height:643.5px;background:#fff;border-radius:27px;box-shadow:0 0 5px rgba(0,0,0,.17)"></div>
<svg style="left:0;top:0" width="1919" height="800">
 <g stroke="#6a6f98" stroke-width="2.7" fill="none">
  <path d="M1869.56 136 V149.8 M1864.2 154.15 H1875.1 M1869.56 154 V160.8 M1883.5 136 V143.3 M1878.1 143.25 H1888.9 M1883.5 147.1 V160.8"/>
 </g>
 <path d="M1856.3 187.7 H1899.6" stroke="#e3e3e3" stroke-width="1"/>
 <path d="M1861.4 216.5 Q1861.4 213.5 1864.4 213.5 H1885 L1892 220.5 V240.3 Q1892 243.3 1889 243.3 H1864.4 Q1861.4 243.3 1861.4 240.3 Z" fill="#c4c4c4"/>
 <rect x="1865" y="217" width="16" height="6.8" fill="#fff"/>
 <circle cx="1876.4" cy="234.9" r="4.9" fill="#fff"/>
 <path d="M1861.5 276 Q1868 273 1876.5 275.5 Q1885 273 1892 276 V297.5 Q1885 295 1876.5 297.5 Q1868 295 1861.5 297.5 Z" fill="#6e7099"/>
 <path d="M1876.3 278.8 Q1882 276.3 1889 277.6 V293.8 Q1882 292.5 1876.3 295 Z" fill="#fff"/>
 <path d="M1878.4 282.3 Q1882 281 1887.3 281.5 M1878.4 286.2 Q1882 285 1887.3 285.4 M1878.4 290.1 Q1882 288.9 1887.3 289.3" stroke="#6e7099" stroke-width="1.7" fill="none"/>
 <g fill="#6e7099">
  <circle cx="1876.4" cy="328.5" r="3.2"/>
  <rect x="1865.3" y="330" width="22.7" height="21.6" rx="3.5"/>
  <ellipse cx="1864" cy="339" rx="3" ry="4.3"/>
  <ellipse cx="1889.3" cy="339" rx="3" ry="4.3"/>
 </g>
 <circle cx="1872.4" cy="338.7" r="2.1" fill="#fff"/>
 <circle cx="1880.7" cy="338.7" r="2.1" fill="#fff"/>
 <rect x="1871" y="343.9" width="11" height="2.8" fill="#fff"/>
 <path d="M1862.7 381.3 L1890.7 392.8 L1862.7 404.9 L1862.7 396.3 L1880.5 392.8 L1862.7 389.3 Z" fill="#6e7099"/>
 <rect x="1864" y="435" width="25" height="19.5" rx="2" fill="none" stroke="#6e7099" stroke-width="2.2"/>
 <rect x="1871" y="454.5" width="11" height="4" fill="#6e7099"/>
 <path d="M1868 442 H1879 M1882 442 H1886 M1880.5 439.5 V444.5 M1868 447.5 H1871 M1874 447.5 H1886 M1872.5 445 V450" stroke="#6e7099" stroke-width="1.6"/>
 <path d="M1856.3 485.5 H1899.6" stroke="#e3e3e3" stroke-width="1"/>
 <!-- PDF -->
 <path d="M1863 518.3 V536.4 H1886" fill="none" stroke="#6e7099" stroke-width="2.4"/>
 <rect x="1867.7" y="508.3" width="23.6" height="23.4" rx="2.5" fill="#6e7099"/>
 <text x="1880.3" y="525.3" font-family="Liberation Sans" font-weight="700" font-size="10.5" fill="#fff" text-anchor="middle" transform="translate(1880.3 0) scale(0.86 1) translate(-1880.3 0)">PDF</text>
 <circle cx="1865.7" cy="509.7" r="8.3" fill="#cacaca" stroke="#fff" stroke-width="1.3"/>
 <path d="M1862.3 508.3 L1865.7 511.6 L1869.1 508.3" fill="none" stroke="#444" stroke-width="1.6"/>
 <!-- Excel -->
 <path d="M1861.8 562 L1877.7 557 V584.3 L1861.8 581.2 Z" fill="#6e7099"/>
 <rect x="1878.8" y="559.8" width="12" height="21.2" fill="none" stroke="#6e7099" stroke-width="1.7"/>
 <path d="M1878.8 564 H1890.8 M1878.8 568.3 H1890.8 M1878.8 572.5 H1890.8 M1878.8 576.8 H1890.8 M1883.6 559.8 V581" stroke="#6e7099" stroke-width="1.5"/>
 <path d="M1867 566 L1872.5 575 M1872.5 566 L1867 575" stroke="#fff" stroke-width="1.9"/>
 <circle cx="1865.7" cy="556.7" r="8.3" fill="#cacaca" stroke="#fff" stroke-width="1.3"/>
 <path d="M1862.3 555.3 L1865.7 558.6 L1869.1 555.3" fill="none" stroke="#444" stroke-width="1.6"/>
 <!-- PPT -->
 <path d="M1860.5 607 L1877.5 601 V631.7 L1860.5 628 Z" fill="#6e7099"/>
 <path d="M1882 606.4 H1892.9 V622.4" fill="none" stroke="#6e7099" stroke-width="1.3"/>
 <rect x="1879.3" y="608" width="11.2" height="17.4" fill="none" stroke="#6e7099" stroke-width="1.6"/>
 <circle cx="1884.6" cy="614.5" r="3.6" fill="#6e7099"/>
 <path d="M1884.6 614.5 V610.9 A3.6 3.6 0 0 1 1888.2 614.5 Z" fill="#fff"/>
 <path d="M1881.2 619.8 H1888.8 M1881.2 622.6 H1888.8" stroke="#6e7099" stroke-width="1.4"/>
 <path d="M1866 612 V622 M1866 612 H1869 Q1872 612 1872 614.8 Q1872 617.5 1869 617.5 H1866" fill="none" stroke="#fff" stroke-width="1.9"/>
 <circle cx="1865.7" cy="603.8" r="8.3" fill="#cacaca" stroke="#fff" stroke-width="1.3"/>
 <path d="M1862.3 602.4 L1865.7 605.7 L1869.1 602.4" fill="none" stroke="#444" stroke-width="1.6"/>
 <!-- admin -->
 <path d="M1862.3 661.5 V670 Q1862.3 672.1 1864.4 672.1 H1875.7 M1875.1 652.9 H1887.5 Q1889.6 652.9 1889.6 655 V660.7" fill="none" stroke="#6e7099" stroke-width="2.5"/>
 <path d="M1883.69 666.32 L1883.68 664.33 L1887.22 664.33 L1887.21 666.32 L1888.62 667.13 L1890.34 666.13 L1892.11 669.20 L1890.38 670.19 L1890.38 671.81 L1892.11 672.80 L1890.34 675.87 L1888.62 674.87 L1887.21 675.68 L1887.22 677.67 L1883.68 677.67 L1883.69 675.68 L1882.28 674.87 L1880.56 675.87 L1878.79 672.80 L1880.52 671.81 L1880.52 670.19 L1878.79 669.20 L1880.56 666.13 L1882.28 667.13 Z M1887.55 671.00 A2.1 2.1 0 1 0 1883.35 671.00 A2.1 2.1 0 1 0 1887.55 671.00 Z" fill="#6e7099" fill-rule="evenodd"/>
 <circle cx="1865" cy="651.8" r="8" fill="#cccccc"/>
 <path d="M1864.9 647 L1868.9 648.3 V652 Q1868.7 655.4 1864.9 657.6 Q1861.1 655.4 1860.9 652 V648.3 Z" fill="#5f5f5f"/>
</svg>

<div class="abs" style="left:1854px;top:1143px;width:49px;height:49px;background:#6b78da;border-radius:50%;box-shadow:0 0 6px rgba(0,0,0,.2)"></div>
<svg style="left:1854px;top:1143px" width="49" height="49">
 <path d="M12.5 21 V12.5 H21 M28 12.5 H36.5 V21 M12.5 28 V36.5 H21 M28 36.5 H36.5 V28" fill="none" stroke="#fff" stroke-width="3"/>
</svg>
</body></html>
